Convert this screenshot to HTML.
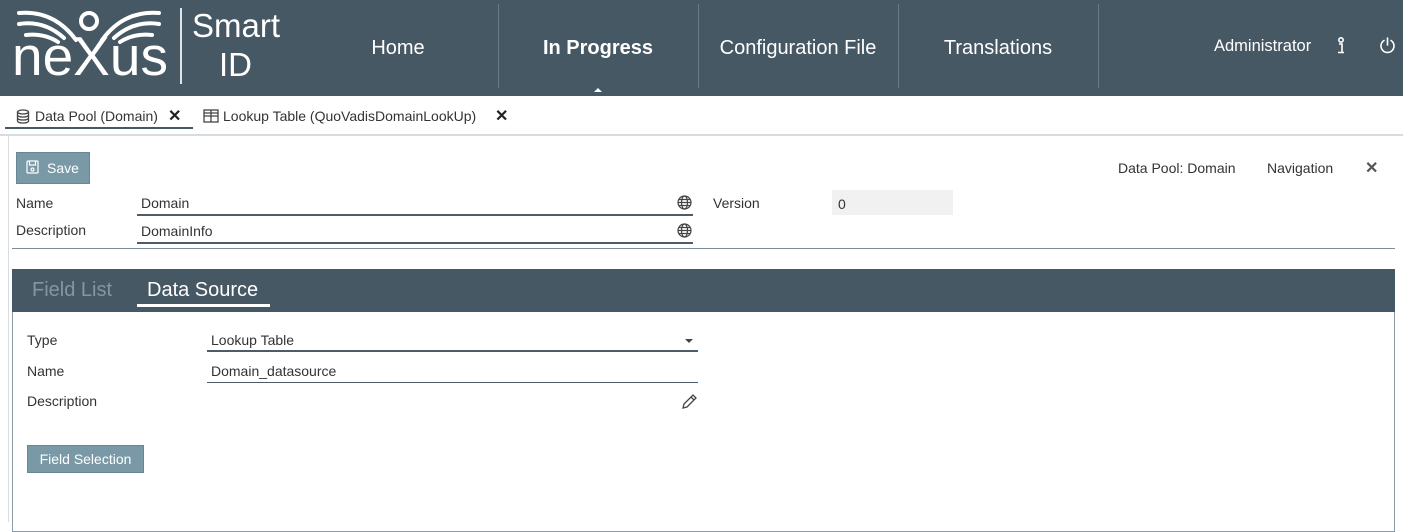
<!DOCTYPE html>
<html><head><meta charset="utf-8"><style>
*{box-sizing:border-box;margin:0;padding:0}
body{width:1403px;height:522px;overflow:hidden;background:#fff;font-family:"Liberation Sans",sans-serif;color:#333;position:relative;font-size:14px}
.hdr{position:absolute;left:0;top:0;width:1403px;height:96px;background:#465864;color:#fff}
.a{position:absolute}
.nav{position:absolute;top:0;height:88px;width:200px;text-align:center;line-height:96px;font-size:20px;color:#fff}
.sep{position:absolute;top:4px;width:1px;height:84px;background:#6b7b86}
.lbl{position:absolute;font-size:14px;color:#333}
.inp{position:absolute;border-bottom:2px solid #4d5c66;font-size:14px;padding-left:4px;color:#333}
</style></head><body>
<div class="hdr">
 <svg class="a" style="left:14px;top:8px" width="150" height="40" viewBox="0 0 150 40">
  <g fill="none" stroke="#fff" stroke-width="4" stroke-linecap="round">
   <path d="M5 5 Q40 2 62 32 M5 16 Q30 12 50 30 M12 27 Q30 25 44 34"/>
   <path d="M145 5 Q110 2 88 32 M145 16 Q120 12 100 30 M138 27 Q120 25 106 34"/>
   <circle cx="75" cy="13" r="8"/>
  </g>
 </svg>
 <div class="a" style="left:12px;top:26px;font-size:55px;line-height:60px;letter-spacing:0px">neXus</div>
 <div class="a" style="left:180px;top:8px;width:2px;height:76px;background:#dfe4e7"></div>
 <div class="a" style="left:192px;top:7px;font-size:33px">Smart</div>
 <div class="a" style="left:219px;top:46px;font-size:33px">ID</div>
 <div class="nav" style="left:298px">Home</div>
 <div class="sep" style="left:498px"></div>
 <div class="nav" style="left:498px;font-weight:bold">In Progress</div>
 <div class="a" style="left:594px;top:84px;width:0;height:0;border:4px solid transparent;border-bottom-color:#fff"></div>
 <div class="sep" style="left:698px"></div>
 <div class="nav" style="left:698px">Configuration File</div>
 <div class="sep" style="left:898px"></div>
 <div class="nav" style="left:898px">Translations</div>
 <div class="sep" style="left:1098px"></div>
 <div class="a" style="left:1214px;top:37px;font-size:16.5px">Administrator</div>
 <svg class="a" style="left:1336px;top:37px" width="10" height="18" viewBox="0 0 10 18"><g fill="none" stroke="#fff" stroke-width="1.6"><circle cx="5" cy="3" r="2.2"/><path d="M3 7h3v8M2 15.5h6"/></g></svg>
 <svg class="a" style="left:1379px;top:37px" width="17" height="17" viewBox="0 0 17 17"><g fill="none" stroke="#fff" stroke-width="1.6" stroke-linecap="round"><path d="M5 3.5A6.5 6.5 0 1 0 12 3.5"/><path d="M8.5 1v7"/></g></svg>
</div>
<!-- tabs -->
<svg class="a" style="left:16px;top:109px" width="14" height="15" viewBox="0 0 14 15"><g fill="none" stroke="#444" stroke-width="1.3"><ellipse cx="7" cy="3" rx="5.5" ry="2"/><path d="M1.5 3v9c0 1.2 2.5 2 5.5 2s5.5-.8 5.5-2V3M1.5 6c0 1.2 2.5 2 5.5 2s5.5-.8 5.5-2M1.5 9c0 1.2 2.5 2 5.5 2s5.5-.8 5.5-2"/></g></svg>
<div class="a" style="left:35px;top:108px;font-size:14px;color:#333">Data Pool (Domain)</div>
<div class="a" style="left:168px;top:106px;font-size:16px;font-weight:bold;color:#222">✕</div>
<div class="a" style="left:5px;top:127px;width:188px;height:2px;background:#465864"></div>
<svg class="a" style="left:203px;top:109px" width="16" height="14" viewBox="0 0 16 14"><g fill="none" stroke="#444" stroke-width="1.3"><rect x="1" y="1" width="14" height="12"/><path d="M1 7h14M8 1v12M1 4h14"/></g></svg>
<div class="a" style="left:223px;top:108px;font-size:14px">Lookup Table (QuoVadisDomainLookUp)</div>
<div class="a" style="left:495px;top:106px;font-size:16px;font-weight:bold;color:#222">✕</div>
<div class="a" style="left:0;top:134px;width:1403px;height:2px;background:#d6dcdf"></div>
<div class="a" style="left:8px;top:136px;width:1px;height:386px;background:#d6dcdf"></div>
<!-- save -->
<div class="a" style="left:16px;top:152px;width:74px;height:32px;background:#7a99a6;border:1px solid #6a8694;color:#fff;font-size:14px;line-height:30px;padding-left:30px">Save</div>
<svg class="a" style="left:26px;top:160px" width="13" height="14" viewBox="0 0 13 14"><g fill="none" stroke="#fff" stroke-width="1.2"><rect x="1" y="1" width="11" height="12" rx="1"/><path d="M3.5 1v4h6V1"/><circle cx="6.5" cy="9.5" r="1.5"/></g></svg>
<div class="a" style="left:1118px;top:160px;font-size:14px;color:#333">Data Pool: Domain</div>
<div class="a" style="left:1267px;top:160px;font-size:14px;color:#333">Navigation</div>
<div class="a" style="left:1365px;top:158px;font-size:16px;font-weight:bold;color:#555">✕</div>
<div class="lbl" style="left:16px;top:195px">Name</div>
<div class="inp" style="left:137px;top:195px;width:556px;height:21px">Domain</div>
<div class="lbl" style="left:16px;top:222px">Description</div>
<div class="inp" style="left:137px;top:223px;width:556px;height:21px">DomainInfo</div>
<svg class="a" style="left:677px;top:195px" width="15" height="15" viewBox="0 0 15 15"><g fill="none" stroke="#444" stroke-width="1.2"><circle cx="7.5" cy="7.5" r="6.5"/><ellipse cx="7.5" cy="7.5" rx="3" ry="6.5"/><path d="M1 7.5h13M2 4.5h11M2 10.5h11"/></g></svg>
<svg class="a" style="left:677px;top:223px" width="15" height="15" viewBox="0 0 15 15"><g fill="none" stroke="#444" stroke-width="1.2"><circle cx="7.5" cy="7.5" r="6.5"/><ellipse cx="7.5" cy="7.5" rx="3" ry="6.5"/><path d="M1 7.5h13M2 4.5h11M2 10.5h11"/></g></svg>
<div class="lbl" style="left:713px;top:195px">Version</div>
<div class="a" style="left:832px;top:190px;width:121px;height:25px;background:#f1f1f1;font-size:14px;padding:6px 6px">0</div>
<div class="a" style="left:12px;top:248px;width:1383px;height:1px;background:#7a8f99"></div>
<!-- tab panel -->
<div class="a" style="left:12px;top:269px;width:1383px;height:43px;background:#465864"></div>
<div class="a" style="left:32px;top:279px;font-size:20px;color:#8496a1">Field List</div>
<div class="a" style="left:147px;top:279px;font-size:20px;color:#fff">Data Source</div>
<div class="a" style="left:137px;top:304px;width:133px;height:3px;background:#fff"></div>
<div class="a" style="left:12px;top:312px;width:1383px;height:220px;border:1px solid #8a9ca6;border-top:none"></div>
<div class="lbl" style="left:27px;top:332px">Type</div>
<div class="inp" style="left:207px;top:332px;width:491px;height:20px;border-bottom-width:2px">Lookup Table</div>
<div class="a" style="left:685px;top:339px;width:0;height:0;border:4px solid transparent;border-top:4px solid #444"></div>
<div class="lbl" style="left:27px;top:363px">Name</div>
<div class="inp" style="left:207px;top:363px;width:491px;height:20px;border-bottom-width:1px">Domain_datasource</div>
<div class="lbl" style="left:27px;top:393px">Description</div>
<svg class="a" style="left:681px;top:393px" width="17" height="17" viewBox="0 0 17 17"><g fill="none" stroke="#444" stroke-width="1.3"><path d="M2 15l1-4 9-9 3 3-9 9z M10 4l3 3"/></g></svg>
<div class="a" style="left:27px;top:445px;width:117px;height:28px;background:#7a99a6;border:1px solid #6a8694;color:#fff;font-size:14px;line-height:26px;text-align:center">Field Selection</div>
</body></html>
